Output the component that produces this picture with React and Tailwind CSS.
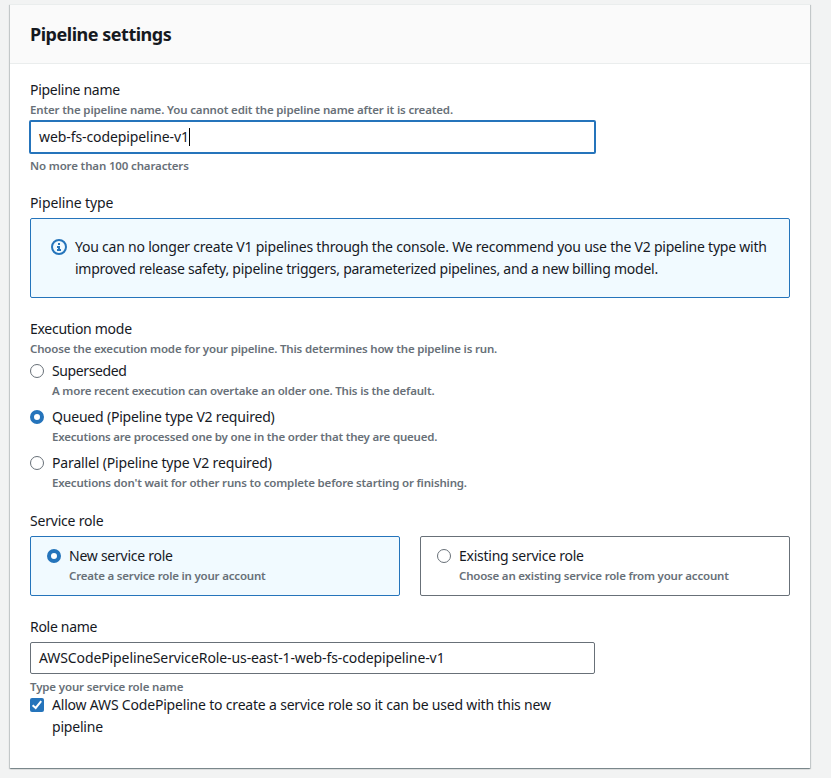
const cx = (...c) => c.join(" ");

function Label({ className = "", tracking = "tracking-[-0.2px]", children }) {
  return <div className={cx("h-[22px] whitespace-nowrap text-[14px] leading-[22px] text-[#16191f]", tracking, className)}>{children}</div>;
}

function Hint({ className = "", tracking = "tracking-[-0.15px]", children }) {
  return <div className={cx("h-[18px] whitespace-nowrap text-[11.5px] font-semibold leading-[18px] text-[#687078]", tracking, className)}>{children}</div>;
}

function Radio({ checked }) {
  return checked ? (
    <span className="mt-1 size-[14px] shrink-0 rounded-full border-4 border-[#2574bb] bg-white" />
  ) : (
    <span className="mt-1 size-[14px] shrink-0 rounded-full border border-[#687078] bg-white" />
  );
}

function Option({ checked, title, hint, titleTracking, hintTracking }) {
  return (
    <div className="flex gap-2">
      <Radio checked={checked} />
      <div>
        <Label tracking={titleTracking}>{title}</Label>
        <Hint tracking={hintTracking}>{hint}</Hint>
      </div>
    </div>
  );
}

export default function App() {
  return (
    <div className="h-[778px] w-[831px] overflow-hidden bg-[#f2f3f3] pl-[10px] pt-1 font-['Noto_Sans','Open_Sans',sans-serif]">
      <section className="h-[764px] w-[800px] border-t border-[#eaeded] bg-white shadow-[0_1px_1px_0_rgba(0,28,36,0.3),1px_1px_1px_0_rgba(0,28,36,0.15),-1px_1px_1px_0_rgba(0,28,36,0.15)]">
        <header className="flex h-[59px] items-center border-b border-[#eaeded] bg-[#fafafa] px-5">
          <h2 className="whitespace-nowrap text-[18px] font-bold leading-[22px] tracking-[-0.48px] text-[#16191f]">Pipeline settings</h2>
        </header>
        <div className="px-5 pt-[15px]">
          <Label tracking="tracking-[-0.28px]">Pipeline name</Label>
          <Hint>Enter the pipeline name. You cannot edit the pipeline name after it is created.</Hint>
          <div className="-ml-px mt-[1px] flex h-[34px] w-[567px] items-center rounded-[2px] border-2 border-[#2574bb] bg-white pl-2">
            <Label tracking="tracking-[-0.09px]">web-fs-codepipeline-v1</Label>
            <span className="h-[18px] w-px bg-black" />
          </div>
          <Hint className="mt-[3px]">No more than 100 characters</Hint>

          <Label className="mt-[17px]" tracking="tracking-[-0.1px]">Pipeline type</Label>
          <div className="mt-[4px] flex h-20 gap-2 rounded-[2px] border border-[#2574bb] bg-[#f1faff] pl-5 pt-[17px]">
            <svg viewBox="0 0 16 16" className="mt-[3px] size-4 shrink-0" fill="none" stroke="#2574bb" strokeWidth="2">
              <circle cx="8" cy="8" r="7" />
              <path d="M8 11V8H6M10 11H6M8 6V4" />
            </svg>
            <div>
              <Label tracking="tracking-[-0.22px]">You can no longer create V1 pipelines through the console. We recommend you use the V2 pipeline type with</Label>
              <Label tracking="tracking-[-0.25px]">improved release safety, pipeline triggers, parameterized pipelines, and a new billing model.</Label>
            </div>
          </div>

          <Label className="mt-5" tracking="tracking-[-0.28px]">Execution mode</Label>
          <Hint tracking="tracking-[-0.18px]">Choose the execution mode for your pipeline. This determines how the pipeline is run.</Hint>
          <div className="mt-[2px] flex flex-col gap-[6px]">
            <Option title="Superseded" titleTracking="tracking-[-0.4px]" hint="A more recent execution can overtake an older one. This is the default." hintTracking="tracking-[-0.18px]" />
            <Option checked title="Queued (Pipeline type V2 required)" hint="Executions are processed one by one in the order that they are queued." hintTracking="tracking-[-0.2px]" />
            <Option title="Parallel (Pipeline type V2 required)" titleTracking="tracking-[-0.15px]" hint="Executions don't wait for other runs to complete before starting or finishing." hintTracking="tracking-[-0.18px]" />
          </div>

          <Label className="mt-[18px]">Service role</Label>
          <div className="mt-1 grid grid-cols-2 gap-5">
            <div className="h-[60px] rounded-[2px] border border-[#2574bb] bg-[#f1faff] pl-4 pt-2">
              <Option checked title="New service role" titleTracking="tracking-[-0.25px]" hint="Create a service role in your account" hintTracking="tracking-[-0.2px]" />
            </div>
            <div className="h-[60px] rounded-[2px] border border-[#687078] pl-4 pt-2">
              <Option title="Existing service role" titleTracking="tracking-[-0.25px]" hint="Choose an existing service role from your account" hintTracking="tracking-[-0.2px]" />
            </div>
          </div>

          <Label className="mt-5" tracking="tracking-[-0.3px]">Role name</Label>
          <div className="mt-1 flex h-8 w-[565px] items-center rounded-[2px] border border-[#687078] pl-2">
            <Label tracking="tracking-[-0.1px]">AWSCodePipelineServiceRole-us-east-1-web-fs-codepipeline-v1</Label>
          </div>
          <Hint className="mt-1">Type your service role name</Hint>
          <div className="-mt-[2px] flex gap-2">
            <span className="mt-1 flex size-[14px] shrink-0 items-center justify-center rounded-[2px] bg-[#2574bb]">
              <svg viewBox="0 0 14 14" className="size-[14px]" fill="none" stroke="white" strokeWidth="2">
                <path d="M2.6 7.2 5.7 10 11.2 3.2" />
              </svg>
            </span>
            <div>
              <Label tracking="tracking-[-0.19px]">Allow AWS CodePipeline to create a service role so it can be used with this new</Label>
              <Label>pipeline</Label>
            </div>
          </div>
        </div>
      </section>
    </div>
  );
}
